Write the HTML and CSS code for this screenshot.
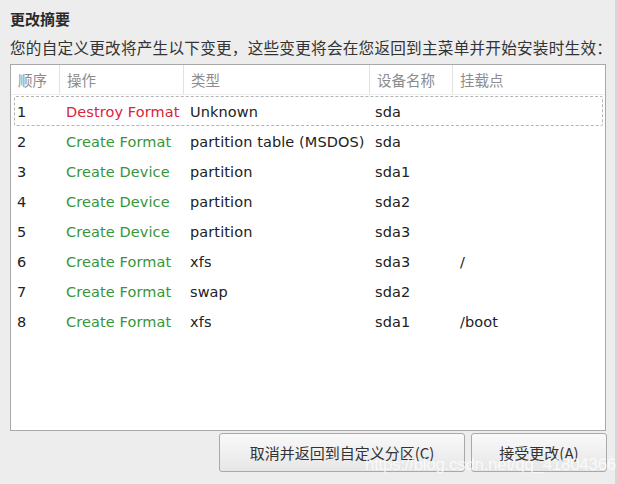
FILE: index.html
```html
<!DOCTYPE html>
<html lang="zh-CN">
<head>
<meta charset="utf-8">
<title>更改摘要</title>
<link rel="stylesheet" href="styles.css">
</head>
<body>
<div class="dialog">
  <div class="title">更改摘要</div>
  <div class="subtitle">您的自定义更改将产生以下变更，这些变更将会在您返回到主菜单并开始安装时生效：</div>
  <div class="table-box">
    <div class="row head">
      <div class="cell">顺序</div>
      <div class="cell">操作</div>
      <div class="cell">类型</div>
      <div class="cell">设备名称</div>
      <div class="cell">挂载点</div>
    </div>
    <div class="rows">
      <div class="row item focus">
        <div class="cell">1</div><div class="cell destroy">Destroy Format</div><div class="cell">Unknown</div><div class="cell">sda</div><div class="cell"></div>
      </div>
      <div class="row item">
        <div class="cell">2</div><div class="cell create">Create Format</div><div class="cell">partition table (MSDOS)</div><div class="cell">sda</div><div class="cell"></div>
      </div>
      <div class="row item">
        <div class="cell">3</div><div class="cell create">Create Device</div><div class="cell">partition</div><div class="cell">sda1</div><div class="cell"></div>
      </div>
      <div class="row item">
        <div class="cell">4</div><div class="cell create">Create Device</div><div class="cell">partition</div><div class="cell">sda2</div><div class="cell"></div>
      </div>
      <div class="row item">
        <div class="cell">5</div><div class="cell create">Create Device</div><div class="cell">partition</div><div class="cell">sda3</div><div class="cell"></div>
      </div>
      <div class="row item">
        <div class="cell">6</div><div class="cell create">Create Format</div><div class="cell">xfs</div><div class="cell">sda3</div><div class="cell">/</div>
      </div>
      <div class="row item">
        <div class="cell">7</div><div class="cell create">Create Format</div><div class="cell">swap</div><div class="cell">sda2</div><div class="cell"></div>
      </div>
      <div class="row item">
        <div class="cell">8</div><div class="cell create">Create Format</div><div class="cell">xfs</div><div class="cell">sda1</div><div class="cell">/boot</div>
      </div>
    </div>
  </div>
  <div class="buttons">
    <button class="btn btn-cancel">取消并返回到自定义分区(C)</button>
    <button class="btn btn-accept">接受更改(A)</button>
  </div>
  <div class="watermark">https://blog.csdn.net/qq_41804366</div>
</div>
</body>
</html>
```
FILE: styles.css
```css
html, body {
  margin: 0;
  padding: 0;
}
body {
  background: #ededed;
  width: 618px;
  height: 484px;
  overflow: hidden;
  font-family: "DejaVu Sans", "Noto Sans CJK SC", sans-serif;
  color: #222;
}
.dialog {
  position: relative;
  height: 484px;
  box-sizing: border-box;
  padding: 9px 0 0 10px;
  border-right: 3px solid #d6d6d6;
}
.title {
  font-family: "Noto Sans CJK SC", sans-serif;
  font-weight: bold;
  font-size: 15px;
  line-height: 20px;
  height: 20px;
  color: #2a2a2a;
}
.subtitle {
  font-family: "Noto Sans CJK SC", sans-serif;
  font-size: 15.6px;
  line-height: 22px;
  margin-top: 7px;
  color: #333;
  white-space: nowrap;
  letter-spacing: 0.25px;
}
.table-box {
  margin-top: 6px;
  width: 594px;
  height: 365px;
  border: 1px solid #a8a8a8;
  background: #fff;
}
.row {
  display: grid;
  grid-template-columns: 49px 124px 186px 83px 1fr;
}
.head {
  height: 29px;
  border-bottom: 1px solid #f0f0f0;
}
.head .cell {
  font-family: "Noto Sans CJK SC", sans-serif;
  font-size: 14.5px;
  color: #8c8c8c;
  line-height: 29px;
  padding-left: 7px;
  border-right: 1px solid #e2e2e2;
}
.head .cell:last-child {
  border-right: none;
}
.rows {
  padding-top: 1px;
}
.item {
  position: relative;
  height: 30px;
}
.item .cell {
  font-size: 14.5px;
  letter-spacing: 0.1px;
  line-height: 32px;
  padding-left: 6px;
  white-space: nowrap;
}
.item .cell:nth-child(4) {
  padding-left: 5px;
}
.item .cell:nth-child(5) {
  padding-left: 7px;
}
.focus::before {
  content: "";
  position: absolute;
  left: 3px;
  right: 2px;
  top: 0;
  bottom: 0;
  border: 1px dashed #b4b4b4;
  border-radius: 2px;
  pointer-events: none;
}
.destroy {
  color: #d8243c;
}
.create {
  color: #35963a;
}
.buttons {
  display: flex;
  justify-content: flex-end;
  gap: 6px;
  width: 597px;
  margin-top: 2px;
}
.btn {
  height: 39px;
  border: 1px solid #a9a9a9;
  border-radius: 3px;
  background: linear-gradient(#f9f9f9, #e6e6e6);
  font-family: "Noto Sans CJK SC", sans-serif;
  font-size: 15px;
  color: #333;
  padding: 0;
}
.btn-cancel {
  width: 246px;
}
.btn-accept {
  width: 136px;
}
.watermark {
  position: absolute;
  left: 365px;
  top: 455px;
  font-family: "Liberation Sans", Arial, sans-serif;
  font-size: 17px;
  letter-spacing: -0.3px;
  color: rgba(255, 255, 255, 0.75);
  white-space: nowrap;
  pointer-events: none;
}
```
